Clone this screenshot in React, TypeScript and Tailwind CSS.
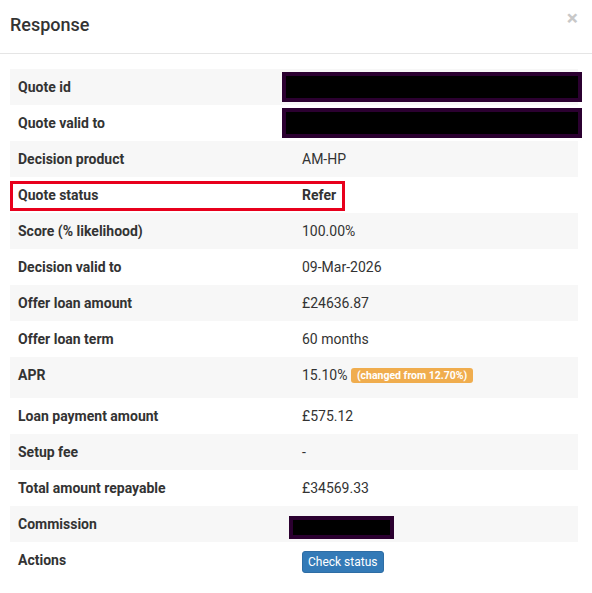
import React from "react";

type Row = {
  label: string;
  value?: React.ReactNode;
  redact?: "wide" | "small";
  highlight?: boolean;
  tall?: boolean;
};

const rows: Row[] = [
  { label: "Quote id", redact: "wide" },
  { label: "Quote valid to", redact: "wide" },
  { label: "Decision product", value: "AM-HP" },
  { label: "Quote status", value: <span className="font-bold">Refer</span>, highlight: true },
  { label: "Score (% likelihood)", value: "100.00%" },
  { label: "Decision valid to", value: "09-Mar-2026" },
  { label: "Offer loan amount", value: "£24636.87" },
  { label: "Offer loan term", value: "60 months" },
  {
    label: "APR",
    tall: true,
    value: (
      <>
        15.10%{" "}
        <span className="inline-block rounded-[3px] bg-[#f0ad4e] px-[6px] align-[1px] text-[10.5px] font-bold leading-[15px] text-white">
          (changed from 12.70%)
        </span>
      </>
    ),
  },
  { label: "Loan payment amount", value: "£575.12" },
  { label: "Setup fee", value: "-" },
  { label: "Total amount repayable", value: "£34569.33" },
  { label: "Commission", redact: "small" },
  {
    label: "Actions",
    value: (
      <button className="mt-[1px] block h-[22px] rounded-[3px] border border-[#2e6da4] bg-[#337ab7] px-[5px] text-[12px] leading-[20px] text-white">
        Check status
      </button>
    ),
  },
];

export default function App() {
  return (
    <div className="min-h-[593px] w-[592px] bg-white font-['Roboto',sans-serif] text-[14px] text-[#333]">
      {/* header */}
      <div className="flex h-[54px] items-start justify-between border-b border-[#e5e5e5] px-[10px]">
        <h4 className="mt-[13px] text-[18px] leading-[24px] font-medium">Response</h4>
        <span className="mt-[6px] mr-[4px] text-[21px] font-bold leading-[24px] text-[#c8c8c8]">×</span>
      </div>

      <div className="px-[10px] pt-[15px]">
        <table className="w-[568px] table-fixed border-collapse">
          <colgroup>
            <col className="w-[284px]" />
            <col />
          </colgroup>
          <tbody>
            {rows.map((row, i) => (
              <tr
                key={row.label}
                className={`${i % 2 === 0 ? "bg-[#f7f7f7]" : "bg-white"} ${row.tall ? "h-[41px]" : "h-9"}`}
              >
                <td className="relative px-2 pt-2 align-top font-bold leading-[20px]">
                  {row.label}
                  {row.highlight && (
                    <div className="absolute top-[4px] left-0 h-[30px] w-[335px] border-[3px] border-[#e8001c]" />
                  )}
                </td>
                <td className="relative px-2 pt-2 align-top leading-[20px]">
                  {row.value}
                  {row.redact === "wide" && (
                    <div className="absolute top-[3px] left-[-12px] h-[30px] w-[300px] border-4 border-[#2b0030] bg-black" />
                  )}
                  {row.redact === "small" && (
                    <div className="absolute top-[10px] left-[-5px] h-[23px] w-[105px] border-4 border-[#2b0030] bg-black" />
                  )}
                </td>
              </tr>
            ))}
          </tbody>
        </table>
      </div>
    </div>
  );
}
